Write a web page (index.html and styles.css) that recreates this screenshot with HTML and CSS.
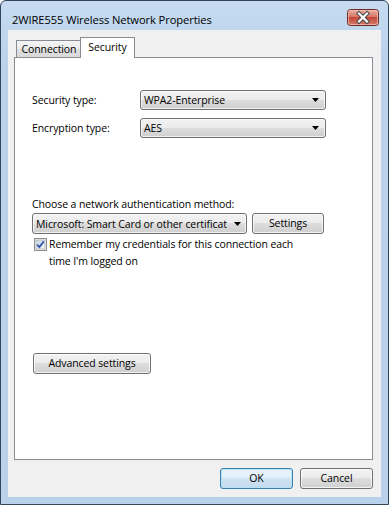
FILE: index.html
```html
<!DOCTYPE html>
<html>
<head>
<meta charset="utf-8">
<title>2WIRE555 Wireless Network Properties</title>
<link rel="stylesheet" href="styles.css">
</head>
<body>
<div class="window">
  <div class="titlebar">
    <span class="title">2WIRE555 Wireless Network Properties</span>
    <div class="close">
      <svg width="32" height="17" viewBox="0 0 32 17">
        <defs>
          <linearGradient id="cg" x1="0" y1="0" x2="0" y2="1">
            <stop offset="0" stop-color="#eab3a8"/>
            <stop offset="0.45" stop-color="#d77767"/>
            <stop offset="0.5" stop-color="#c4483a"/>
            <stop offset="1" stop-color="#d5806a"/>
          </linearGradient>
        </defs>
        <rect x="0.5" y="0.5" width="31" height="16" rx="3" ry="3" fill="url(#cg)" stroke="#6e2a22"/>
        <rect x="1.5" y="1.5" width="29" height="14" rx="2" ry="2" fill="none" stroke="#f2c6bc" stroke-opacity="0.7"/>
        <path d="M12 4.5 L20 12.5 M20 4.5 L12 12.5" stroke="#4a4a4a" stroke-width="4.2" stroke-linecap="square"/>
        <path d="M12 4.5 L20 12.5 M20 4.5 L12 12.5" stroke="#ffffff" stroke-width="2.2" stroke-linecap="square"/>
      </svg>
    </div>
  </div>
  <div class="client">
    <div class="tabs">
      <div class="tab">Connection</div>
      <div class="tab selected">Security</div>
    </div>
    <div class="panel">
      <div class="field-row">
        <span class="label">Security type:</span>
        <div class="combo type-combo">
          <span class="combo-text">WPA2-Enterprise</span>
          <svg class="arrow" width="7" height="4" viewBox="0 0 7 4"><polygon points="0,0 7,0 3.5,4" fill="#000"/></svg>
        </div>
      </div>
      <div class="field-row second">
        <span class="label">Encryption type:</span>
        <div class="combo type-combo">
          <span class="combo-text">AES</span>
          <svg class="arrow" width="7" height="4" viewBox="0 0 7 4"><polygon points="0,0 7,0 3.5,4" fill="#000"/></svg>
        </div>
      </div>
      <div class="auth-label">Choose a network authentication method:</div>
      <div class="auth-row">
        <div class="combo auth-combo">
          <span class="combo-text">Microsoft: Smart Card or other certificat</span>
          <svg class="arrow" width="7" height="4" viewBox="0 0 7 4"><polygon points="0,0 7,0 3.5,4" fill="#000"/></svg>
        </div>
        <div class="btn settings-btn">Settings</div>
      </div>
      <div class="check-row">
        <svg class="checkbox" width="13" height="13" viewBox="0 0 13 13">
          <defs>
            <linearGradient id="kb" x1="0" y1="0" x2="1" y2="1">
              <stop offset="0" stop-color="#cbd6e6"/>
              <stop offset="1" stop-color="#f4f7fb"/>
            </linearGradient>
          </defs>
          <rect x="0.5" y="0.5" width="12" height="12" fill="#f4f4f4" stroke="#8e8f8f"/>
          <rect x="2" y="2" width="9" height="9" fill="url(#kb)" stroke="#aeb3b9" stroke-width="0.8"/>
          <path d="M3.2 6.6 L5.4 9 L9.8 3.4" fill="none" stroke="#3158a8" stroke-width="1.8"/>
        </svg>
        <span class="check-text">Remember my credentials for this connection each<br>time I'm logged on</span>
      </div>
      <div class="btn advanced-btn">Advanced settings</div>
    </div>
    <div class="footer">
      <div class="btn footer-btn default">OK</div>
      <div class="btn footer-btn">Cancel</div>
    </div>
  </div>
</div>
</body>
</html>
```

FILE: styles.css
```css
html, body {
  margin: 0;
  padding: 0;
  background: #ffffff;
}

body {
  font-family: "Open Sans", "Noto Sans", "Liberation Sans", sans-serif;
  font-size: 10.5px;
  letter-spacing: -0.1px;
  color: #000;
}

.window {
  box-sizing: border-box;
  width: 389px;
  height: 505px;
  border: 1px solid #34465a;
  border-radius: 6px 6px 0 0;
  background: linear-gradient(#c6dbf1, #bad2ea 60px, #b9d1ea);
  padding: 0 7px 7px 7px;
  display: flex;
  flex-direction: column;
}

.titlebar {
  height: 29px;
  display: flex;
  align-items: flex-start;
  flex-shrink: 0;
}

.title {
  margin-left: 4px;
  margin-top: 11px;
  line-height: 15px;
  font-size: 11.2px;
  color: #000;
}

.close {
  margin-left: auto;
  margin-top: 8px;
  margin-right: 2px;
  width: 32px;
  height: 17px;
}

.close svg {
  display: block;
}

.client {
  flex: 1;
  background: #f0f0f0;
  padding: 7px 8px 8px 6px;
  display: flex;
  flex-direction: column;
}

.tabs {
  display: flex;
  align-items: flex-end;
  height: 21px;
  margin-bottom: -1px;
  padding-left: 2px;
}

.tab {
  box-sizing: border-box;
  height: 18px;
  width: 66px;
  border: 1px solid #898c95;
  border-bottom: none;
  background: linear-gradient(#f4f4f4, #ebebeb 50%, #dedede 50%, #dadada);
  display: flex;
  align-items: center;
  justify-content: center;
  padding-bottom: 1px;
}

.tab.selected {
  position: relative;
  z-index: 1;
  height: 21px;
  width: 55px;
  margin-left: -2px;
  background: #ffffff;
  padding-bottom: 3px;
}

.panel {
  box-sizing: border-box;
  height: 403px;
  border: 1px solid #898c95;
  background: #ffffff;
  padding: 32px 0 0 17px;
  display: flex;
  flex-direction: column;
  align-items: flex-start;
}

.field-row {
  display: flex;
  align-items: center;
  height: 20px;
}

.field-row.second {
  margin-top: 8px;
}

.label {
  width: 108px;
}

.combo {
  box-sizing: border-box;
  display: flex;
  align-items: center;
  border: 1px solid #707070;
  border-radius: 3px;
  background: linear-gradient(#f2f2f2, #ebebeb 50%, #dddddd 50%, #cfcfcf);
  box-shadow: inset 0 0 0 1px rgba(255, 255, 255, 0.7);
  padding: 0 6px 0 3px;
}

.type-combo {
  width: 186px;
  height: 20px;
}

.combo-text {
  flex: 1;
  white-space: nowrap;
}

.arrow {
  display: block;
  flex-shrink: 0;
  margin-left: 4px;
}

.auth-label {
  margin-top: 59px;
  line-height: 15px;
}

.auth-row {
  display: flex;
  margin-top: 1px;
  height: 21px;
}

.auth-combo {
  width: 215px;
  height: 21px;
  padding-right: 5px;
}

.btn {
  box-sizing: border-box;
  display: flex;
  align-items: center;
  justify-content: center;
  border: 1px solid #707070;
  border-radius: 3px;
  background: linear-gradient(#f2f2f2, #ebebeb 50%, #dddddd 50%, #cfcfcf);
  box-shadow: inset 0 0 0 1px rgba(255, 255, 255, 0.75);
  height: 21px;
  padding-bottom: 1px;
}

.settings-btn {
  margin-left: 5px;
  width: 72px;
}

.check-row {
  display: flex;
  align-items: flex-start;
  margin-top: 2px;
  margin-left: 2px;
}

.checkbox {
  display: block;
  margin-top: 2px;
  flex-shrink: 0;
}

.check-text {
  margin-left: 2px;
  line-height: 17px;
}

.advanced-btn {
  margin-top: 83px;
  margin-left: 1px;
  width: 118px;
}

.footer {
  margin-top: 8px;
  display: flex;
  justify-content: flex-end;
  gap: 7px;
}

.footer-btn {
  width: 73px;
}

.footer-btn.default {
  border-color: #3c7fb1;
  background: linear-gradient(#eaf5fc, #e0eef8 50%, #cfe3f1 50%, #c3dbec);
  box-shadow: inset 0 0 0 1px #b8e3f8;
}
```
